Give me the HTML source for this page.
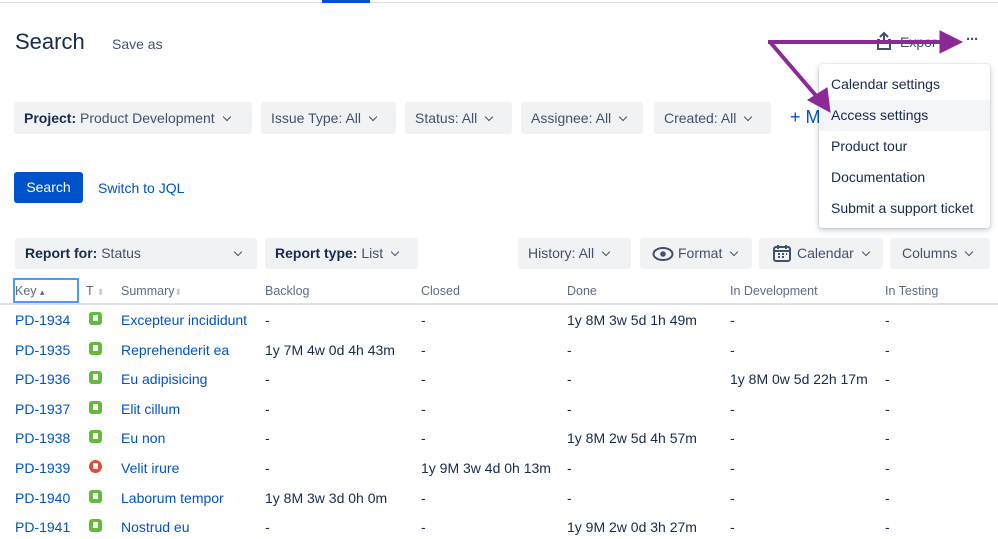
<!DOCTYPE html><html><head><style>
body{margin:0;width:998px;height:539px;overflow:hidden;background:#fff;font-family:"Liberation Sans",sans-serif;color:#172b4d;position:relative}
.a{position:absolute;white-space:nowrap}
.btn{position:absolute;background:#f1f2f4;border-radius:3px;height:32px;line-height:32px;font-size:14px;color:#42526e;padding:0 10px;box-sizing:border-box}
.btn b{color:#172b4d;font-weight:bold}
.chev{display:inline-block;width:5px;height:5px;border-right:1.5px solid #42526e;border-bottom:1.5px solid #42526e;transform:rotate(45deg);margin-left:9px;position:relative;top:-3px}
.h{font-size:12.5px;color:#5e6c84;top:284px}
.l{color:#0052cc;font-size:14px}
.t{font-size:14px;color:#172b4d}
.ic{position:absolute;width:13px;height:13px;border-radius:3px;background:#63ba3c}
.ic::after{content:"";position:absolute;left:4px;top:3px;width:5px;height:6px;background:#fff}
.menu{position:absolute;left:819px;top:64px;width:171px;height:164px;background:#fff;border-radius:3px;box-shadow:0 2px 6px rgba(9,30,66,.25),0 0 1px rgba(9,30,66,.3)}
.menu div{height:31px;line-height:31px;padding-left:12px;font-size:14px;color:#172b4d}
</style></head><body>
<div class="a" style="left:0;top:2px;width:998px;height:1px;background:#dfe1e6"></div>
<div class="a" style="left:322px;top:0;width:48px;height:3px;background:#0052cc"></div>
<div class="a" style="left:15px;top:29px;font-size:22px;color:#172b4d">Search</div>
<div class="a" style="left:112px;top:36px;font-size:14px;color:#42526e">Save as</div>
<svg class="a" style="left:875px;top:31px" width="18" height="20" viewBox="0 0 18 20"><path d="M9 13V2M5 6l4-4 4 4M5 9H3v9h12V9h-2" fill="none" stroke="#42526e" stroke-width="2"/></svg>
<div class="a" style="left:900px;top:34px;font-size:14px;color:#42526e">Expor</div>
<div class="a" style="left:966px;top:31px;font-size:15px;font-weight:bold;color:#42526e;letter-spacing:-1px">···</div>
<div class="btn" style="left:14px;top:102px;width:238px"><b>Project:</b> Product Development<span class="chev"></span></div>
<div class="btn" style="left:261px;top:102px;width:135px">Issue Type: All<span class="chev"></span></div>
<div class="btn" style="left:405px;top:102px;width:107px">Status: All<span class="chev"></span></div>
<div class="btn" style="left:521px;top:102px;width:122px">Assignee: All<span class="chev"></span></div>
<div class="btn" style="left:654px;top:102px;width:117px">Created: All<span class="chev"></span></div>
<div class="a" style="left:790px;top:107px;font-size:18px;color:#0052cc">+ M</div>
<div class="a" style="left:14px;top:172px;width:69px;height:31px;background:#0052cc;border-radius:3px;color:#fff;font-size:14px;line-height:31px;text-align:center">Search</div>
<div class="a" style="left:98px;top:180px;font-size:14px;color:#0052cc">Switch to JQL</div>
<div class="btn" style="left:15px;top:238px;width:242px;height:31px;line-height:31px"><b>Report for:</b> Status<span class="chev" style="position:absolute;right:16px;top:11px"></span></div>
<div class="btn" style="left:265px;top:238px;width:153px;height:31px;line-height:31px"><b>Report type:</b> List<span class="chev"></span></div>
<div class="btn" style="left:518px;top:238px;width:113px;height:31px;line-height:31px">History: All<span class="chev"></span></div>
<div class="btn" style="left:640px;top:238px;width:112px;height:31px;line-height:31px;padding-left:38px">Format<span class="chev"></span></div>
<svg class="a" style="left:652px;top:246px" width="22" height="16"><ellipse cx="11" cy="8" rx="9.5" ry="6" fill="none" stroke="#42526e" stroke-width="2"/><circle cx="11" cy="8" r="2.8" fill="#42526e"/></svg>
<div class="btn" style="left:759px;top:238px;width:124px;height:31px;line-height:31px;padding-left:38px">Calendar<span class="chev"></span></div>
<svg class="a" style="left:773px;top:245px" width="18" height="17"><rect x="1" y="2" width="16" height="14" rx="2" fill="none" stroke="#42526e" stroke-width="2"/><path d="M1 6h16M5 0v4M13 0v4M5 9h2M9 9h2M13 9h1M5 12h2M9 12h2" stroke="#42526e" stroke-width="2"/></svg>
<div class="btn" style="left:890px;top:238px;width:100px;height:31px;line-height:31px;padding-left:12px">Columns<span class="chev"></span></div>
<div class="a" style="left:13px;top:278px;width:66px;height:25px;border:2px solid #4c9aff;box-sizing:border-box"></div>
<div class="a" style="left:0;top:303px;width:998px;height:2px;background:#dfe1e6"></div>
<div class="a h" style="left:15px">Key <span style="font-size:9px">▴</span></div><div class="a h" style="left:86px">T <span style="color:#c1c7d0;font-size:9px">⬍</span></div><div class="a h" style="left:121px">Summary<span style="color:#c1c7d0;font-size:9px">⬍</span></div>
<div class="a h" style="left:265px">Backlog</div><div class="a h" style="left:421px">Closed</div><div class="a h" style="left:567px">Done</div><div class="a h" style="left:730px">In Development</div><div class="a h" style="left:885px">In Testing</div>
<div id="rows"></div>
<script>
var d=[["1934","Excepteur incididunt","-","-","1y 8M 3w 5d 1h 49m","-","-",0],["1935","Reprehenderit ea","1y 7M 4w 0d 4h 43m","-","-","-","-",0],["1936","Eu adipisicing","-","-","-","1y 8M 0w 5d 22h 17m","-",0],["1937","Elit cillum","-","-","-","-","-",0],["1938","Eu non","-","-","1y 8M 2w 5d 4h 57m","-","-",0],["1939","Velit irure","-","1y 9M 3w 4d 0h 13m","-","-","-",1],["1940","Laborum tempor","1y 8M 3w 3d 0h 0m","-","-","-","-",0],["1941","Nostrud eu","-","-","1y 9M 2w 0d 3h 27m","-","-",0]];
var h="",xs=[265,421,567,730,885];
d.forEach(function(r,i){var y=312+i*29.6;
h+='<div class="a l" style="left:15px;top:'+y+'px">PD-'+r[0]+'</div>';
h+='<div class="ic" style="left:89px;top:'+(y+0)+'px;'+(r[7]?'background:#e5493a;border-radius:7px':'')+'"></div>';
h+='<div class="a l" style="left:121px;top:'+y+'px">'+r[1]+'</div>';
for(var j=0;j<5;j++)h+='<div class="a t" style="left:'+xs[j]+'px;top:'+y+'px">'+r[j+2]+'</div>';});
document.getElementById("rows").innerHTML=h;
</script>
<div class="menu"><div style="margin-top:5px">Calendar settings</div><div style="background:#f4f5f7">Access settings</div><div>Product tour</div><div>Documentation</div><div>Submit a support ticket</div></div>
<svg class="a" style="left:0;top:0" width="998" height="539"><g stroke="#8b2a97" stroke-width="4" fill="#8b2a97"><path d="M768 42H942M770 42L818 98" fill="none"/><path d="M940 31L962 42L940 53Z" stroke-width="1"/><path d="M808 100L830 112L827 88Z" stroke-width="1"/></g></svg>
</body></html>
